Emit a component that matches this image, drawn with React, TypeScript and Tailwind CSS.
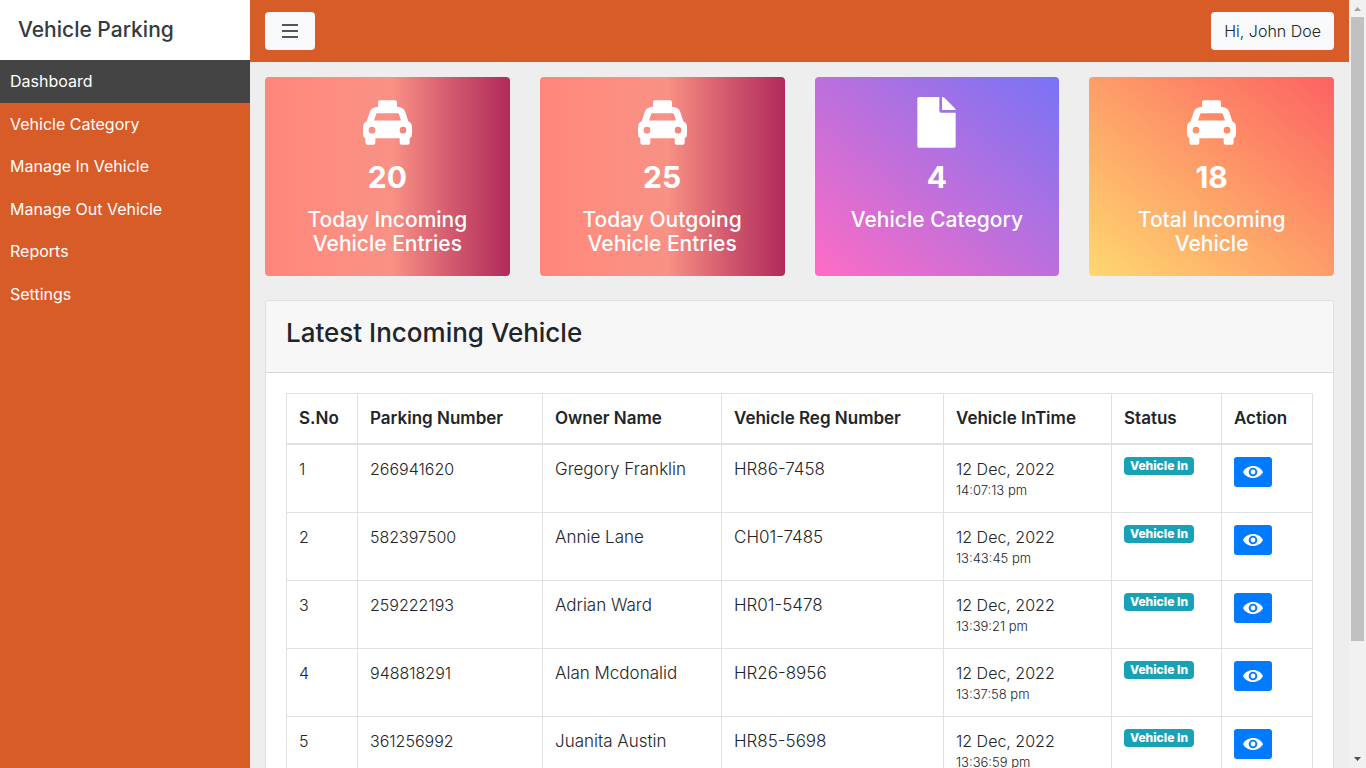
import React from "react";

const navItems = [
  "Dashboard",
  "Vehicle Category",
  "Manage In Vehicle",
  "Manage Out Vehicle",
  "Reports",
  "Settings",
];

function TaxiIcon() {
  return (
    <svg width="49" height="45" viewBox="0 0 147 134" fill="currentColor" aria-hidden="true">
      <path
        fillRule="evenodd"
        d="M51 0h45q6 0 6 6v14q20 1 25 16l9 27q11 5 11 18v22q0 7-7 11v14q0 6-6 6h-18q-6 0-6-6v-14H37v14q0 6-6 6H13q-6 0-6-6v-14q-7-4-7-11V81q0-13 11-18l9-27q5-15 25-16V6q0-6 6-6zM43 39q-3 0-4 4l-6 18h81l-6-18q-1-4-4-4zM27 80a10 10 0 1 0 0 20a10 10 0 1 0 0-20zM120 80a10 10 0 1 0 0 20a10 10 0 1 0 0-20z"
      />
    </svg>
  );
}

function FileIcon() {
  return (
    <svg width="39" height="51" viewBox="0 0 117 153" fill="currentColor" aria-hidden="true">
      <path d="M6 0h61v42q0 5 5 5h44v100q0 5-5 5H6q-5 0-5-5V5q0-5 5-5z" />
      <path d="M75 0q5 0 8 3l29 29q4 4 4 7H75z" />
    </svg>
  );
}

function EyeIcon() {
  return (
    <svg width="20" height="12" viewBox="0 0 20 12" fill="currentColor" aria-hidden="true">
      <path
        fillRule="evenodd"
        d="M0 6C1.700 2.400 5.500 0 10 0s8.300 2.400 10 6c-1.700 3.600-5.500 6-10 6S1.700 9.600 0 6zM10 1.700a4.300 4.300 0 1 0 0 8.600a4.300 4.300 0 1 0 0-8.600z"
      />
      <circle cx="10" cy="6" r="2.400" />
    </svg>
  );
}

const redCard =
  "bg-[linear-gradient(to_right,#ff867a_0%,#ff8c7f_21%,#f99185_52%,#cf556c_78%,#b12a5b_100%)]";

const cards = [
  { icon: TaxiIcon, value: 20, label: "Today Incoming Vehicle Entries", bg: redCard },
  { icon: TaxiIcon, value: 25, label: "Today Outgoing Vehicle Entries", bg: redCard },
  {
    icon: FileIcon,
    value: 4,
    label: "Vehicle Category",
    bg: "bg-[linear-gradient(to_top_right,#ff6cc4,#7873f5)]",
  },
  {
    icon: TaxiIcon,
    value: 18,
    label: "Total Incoming Vehicle",
    bg: "bg-[linear-gradient(to_top_right,#ffd86f,#fc6262)]",
  },
];

const columns = [
  { title: "S.No", width: "w-[71px]" },
  { title: "Parking Number", width: "w-[185px]" },
  { title: "Owner Name", width: "w-[179px]" },
  { title: "Vehicle Reg Number", width: "w-[222px]" },
  { title: "Vehicle InTime", width: "w-[168px]" },
  { title: "Status", width: "w-[110px]" },
  { title: "Action", width: "w-[91px]" },
];

const rows = [
  { parking: "266941620", owner: "Gregory Franklin", reg: "HR86-7458", time: "14:07:13 pm" },
  { parking: "582397500", owner: "Annie Lane", reg: "CH01-7485", time: "13:43:45 pm" },
  { parking: "259222193", owner: "Adrian Ward", reg: "HR01-5478", time: "13:39:21 pm" },
  { parking: "948818291", owner: "Alan Mcdonalid", reg: "HR26-8956", time: "13:37:58 pm" },
  { parking: "361256992", owner: "Juanita Austin", reg: "HR85-5698", time: "13:36:59 pm" },
];

function Sidebar() {
  return (
    <aside className="w-[250px] shrink-0 bg-[#d85c27]">
      <div className="flex h-[60px] items-center bg-white px-[18px] text-[21px] font-medium text-[#343a40]">
        Vehicle Parking
      </div>
      <nav className="grid h-[255px] grid-rows-6">
        {navItems.map((item, i) => (
          <a
            key={item}
            href="#"
            className={`flex items-center px-[10px] text-[16px] leading-5 text-white ${
              i === 0 ? "bg-[#444444]" : ""
            }`}
          >
            {item}
          </a>
        ))}
      </nav>
    </aside>
  );
}

function TopBar() {
  return (
    <header className="flex items-center justify-between bg-[#d85c27] px-[15px] py-3">
      <button
        aria-label="Toggle menu"
        className="flex h-[38px] w-[50px] items-center justify-center rounded bg-[#f8f9fa] text-[#555558]"
      >
        <svg width="16" height="14" viewBox="0 0 16 14" fill="currentColor">
          <path d="M0 0h16v2H0zM0 6h16v2H0zM0 12h16v2H0z" />
        </svg>
      </button>
      <button className="h-[38px] rounded bg-[#f8f9fa] px-[13px] text-[16px] font-light text-[#212529]">
        Hi, John Doe
      </button>
    </header>
  );
}

function SummaryCards() {
  return (
    <div className="grid grid-cols-4 gap-[30px]">
      {cards.map(({ icon: Icon, value, label, bg }) => (
        <section
          key={label}
          className={`flex flex-col items-center rounded p-5 text-center text-white ${bg}`}
        >
          <div className="flex h-[51px] items-center">
            <Icon />
          </div>
          <p className="mt-[10px] text-[30px] leading-[38px] font-bold">{value}</p>
          <h2 className="mt-3 text-[21px] leading-6 font-medium">{label}</h2>
        </section>
      ))}
    </div>
  );
}

function VehicleTable() {
  return (
    <section className="mt-6 rounded border border-[#dfdfdf] bg-white">
      <h1 className="rounded-t border-b border-[#d8d8d8] bg-[#f7f7f7] px-5 pt-4 pb-[23px] text-[26px] leading-8 font-medium">
        Latest Incoming Vehicle
      </h1>
      <div className="p-5">
        <table className="w-full table-fixed border-collapse border border-[#dee2e6] text-left">
          <thead>
            <tr>
              {columns.map((c) => (
                <th
                  key={c.title}
                  className={`border border-b-2 border-[#dee2e6] p-3 text-[17px] leading-[25px] font-semibold whitespace-nowrap ${c.width}`}
                >
                  {c.title}
                </th>
              ))}
            </tr>
          </thead>
          <tbody className="align-top text-[16px] leading-6 font-light">
            {rows.map((r, i) => (
              <tr key={r.parking}>
                <td className="border border-[#dee2e6] p-3">{i + 1}</td>
                <td className="border border-[#dee2e6] p-3">{r.parking}</td>
                <td className="border border-[#dee2e6] p-3 text-[17px] leading-6">{r.owner}</td>
                <td className="border border-[#dee2e6] p-3 text-[17px] leading-6">{r.reg}</td>
                <td className="border border-[#dee2e6] p-3">
                  12 Dec, 2022
                  <small className="block text-[13px] leading-[19px]">{r.time}</small>
                </td>
                <td className="border border-[#dee2e6] p-3">
                  <span className="block w-[70px] rounded bg-[#17a2b8] text-center text-[12px] leading-[18px] font-extrabold whitespace-nowrap text-white">
                    Vehicle In
                  </span>
                </td>
                <td className="border border-[#dee2e6] p-3">
                  <button
                    aria-label={`View ${r.owner}`}
                    className="flex h-[30px] w-[38px] items-center justify-center rounded-[3px] bg-[#007bff] text-white"
                  >
                    <EyeIcon />
                  </button>
                </td>
              </tr>
            ))}
          </tbody>
        </table>
      </div>
    </section>
  );
}

function ScrollTrack() {
  return (
    <div
      aria-hidden="true"
      className="flex w-[17px] shrink-0 flex-col items-center justify-between bg-[#f1f1f1]"
    >
      <svg width="17" height="17" viewBox="0 0 17 17" className="shrink-0">
        <path d="M5 11h7L8.500 7z" fill="#a3a3a3" />
      </svg>
      <div className="w-[13px] flex-1">
        <div className="h-[85%] bg-[#c1c1c1]" />
      </div>
      <svg width="17" height="17" viewBox="0 0 17 17" className="shrink-0">
        <path d="M5 6h7l-3.500 4z" fill="#505050" />
      </svg>
    </div>
  );
}

export default function App() {
  return (
    <div className="flex h-screen overflow-hidden bg-[#eeeeee] font-['Inter',sans-serif] text-[#212529]">
      <Sidebar />
      <div className="min-w-0 flex-1 overflow-hidden">
        <TopBar />
        <main className="p-[15px]">
          <SummaryCards />
          <VehicleTable />
        </main>
      </div>
      <ScrollTrack />
    </div>
  );
}
